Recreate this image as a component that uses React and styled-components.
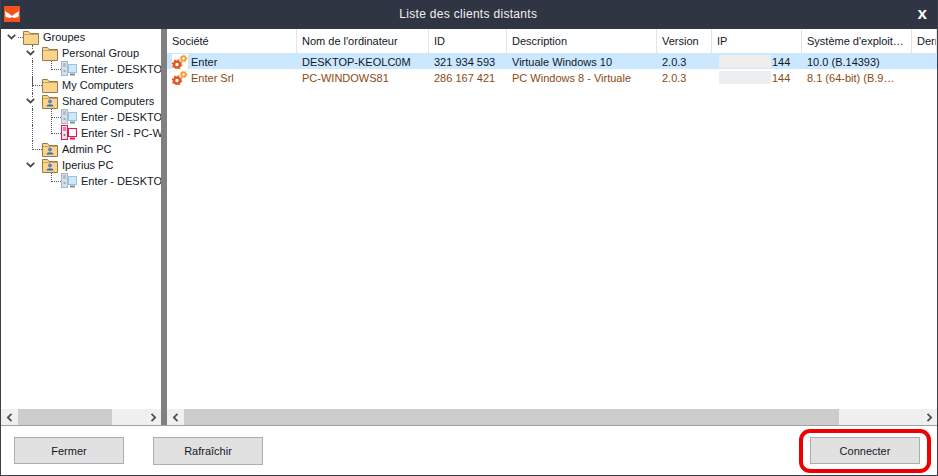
import React from 'react';
import styled, { createGlobalStyle } from 'styled-components';

const GlobalStyle = createGlobalStyle`
  html, body {
    margin: 0;
    padding: 0;
    background: #fff;
  }
  *, *::before, *::after {
    box-sizing: border-box;
  }
  body {
    font-family: 'Liberation Sans', Arial, sans-serif;
    font-size: 11px;
    color: #111827;
  }
`;

const COLUMNS = '130px 132px 78px 150px 55px 90px 110px 1fr';

const treeRows = [
  { level: 0, kind: 'folder', label: 'Groupes', open: true },
  { level: 1, kind: 'folder', label: 'Personal Group', open: true, through: true },
  { level: 2, kind: 'pc', label: 'Enter - DESKTOP-KEOLC0M', elbow: true, through: true },
  { level: 1, kind: 'folder', label: 'My Computers', elbow: true, through: true },
  { level: 1, kind: 'user', label: 'Shared Computers', open: true, through: true },
  { level: 2, kind: 'pc', label: 'Enter - DESKTOP-KEOLC0M', elbow: true, through: true },
  { level: 2, kind: 'off', label: 'Enter Srl - PC-WINDOWS81', elbow: true, through: true },
  { level: 1, kind: 'user', label: 'Admin PC', elbow: true },
  { level: 1, kind: 'user', label: 'Iperius PC', open: true },
  { level: 2, kind: 'pc', label: 'Enter - DESKTOP-KEOLC0M', elbow: true },
];

const headers = ['Société', "Nom de l'ordinateur", 'ID', 'Description', 'Version', 'IP', "Système d'exploit…", 'Dernière'];

const clients = [
  { company: 'Enter', computer: 'DESKTOP-KEOLC0M', id: '321 934 593', desc: 'Virtuale Windows 10', version: '2.0.3', os: '10.0 (B.14393)', selected: true },
  { company: 'Enter Srl', computer: 'PC-WINDOWS81', id: '286 167 421', desc: 'PC Windows 8 - Virtuale', version: '2.0.3', os: '8.1 (64-bit) (B.9…' },
];

function Logo() {
  return (
    <svg width="16" height="16" viewBox="0 0 16 16">
      <rect width="16" height="16" fill="#f4511e" />
      <path d="M1 5 L5.5 8 L8 10 L10.5 8 L15 5 L14.5 11 L10 12 L8 11 L6 12 L1.5 11 Z" fill="#fff" />
    </svg>
  );
}

function Chevron() {
  return (
    <svg width="9" height="8" viewBox="0 0 9 8">
      <rect width="9" height="8" fill="#fff" />
      <path d="M0.8 1.8 L4.5 5.5 L8.2 1.8" fill="none" stroke="#4b4b4b" strokeWidth="1.8" />
    </svg>
  );
}

function FolderIcon({ user }) {
  return (
    <svg width="16" height="15" viewBox="0 0 16 15">
      <path d="M0.5 14.5 V1.5 H5.5 L7 3.5 H15.5 V14.5 Z" fill="#f8d48d" stroke="#9a7b45" />
      <path d="M1 4.5 H15" stroke="#c9a662" />
      {user && (
        <g>
          <circle cx="8" cy="7.5" r="2" fill="#5b84c4" />
          <path d="M4.5 12.5 C4.5 9.5 11.5 9.5 11.5 12.5 Z" fill="#3f6cb4" />
        </g>
      )}
    </svg>
  );
}

function ComputerIcon({ off }) {
  const line = off ? '#e8174a' : '#a9b8c9';
  const tower = off ? '#fbe3ea' : '#d6dfea';
  const screen = off ? '#ffffff' : '#cfe7f9';
  return (
    <svg width="16" height="16" viewBox="0 0 16 16">
      <rect x="7.5" y="3.5" width="8" height="8" fill={screen} stroke={off ? line : '#9cc3de'} />
      <path d="M9 13.5 H14" stroke={off ? line : '#7d8b99'} strokeWidth="2" />
      <rect x="0.5" y="0.5" width="6" height="14" fill={tower} stroke={line} />
      <path d="M2 3 H5 M2 5 H5" stroke={off ? '#e8174a' : '#8b9cb0'} />
      <circle cx="3.5" cy="10" r="1" fill={off ? '#7a5bd0' : '#8b9cb0'} />
    </svg>
  );
}

function GearsIcon() {
  return (
    <svg width="16" height="16" viewBox="0 0 16 16">
      <circle cx="5" cy="10.5" r="3" fill="none" stroke="#e2571b" strokeWidth="2.6" />
      <circle cx="5" cy="10.5" r="4.6" fill="none" stroke="#e2571b" strokeWidth="1.2" strokeDasharray="1.8 1.8" />
      <circle cx="11.5" cy="4.5" r="2.2" fill="none" stroke="#f0a030" strokeWidth="1.8" />
      <circle cx="11.5" cy="4.5" r="3.4" fill="none" stroke="#f0a030" strokeWidth="1" strokeDasharray="1.4 1.4" />
    </svg>
  );
}

function ArrowLeft() {
  return (
    <svg width="7" height="9" viewBox="0 0 7 9">
      <path d="M5.5 0.8 L1.8 4.5 L5.5 8.2" fill="none" stroke="#505050" strokeWidth="1.8" />
    </svg>
  );
}

function ArrowRight() {
  return (
    <svg width="7" height="9" viewBox="0 0 7 9">
      <path d="M1.5 0.8 L5.2 4.5 L1.5 8.2" fill="none" stroke="#505050" strokeWidth="1.8" />
    </svg>
  );
}

function ScrollBar({ thumbStart, thumbWidth }) {
  return (
    <ScrollTrack>
      <ScrollArrow><ArrowLeft /></ScrollArrow>
      <ScrollRail>
        <ScrollThumb style={{ marginLeft: thumbStart, width: thumbWidth }} />
      </ScrollRail>
      <ScrollArrow><ArrowRight /></ScrollArrow>
    </ScrollTrack>
  );
}

function TreeRow({ row }) {
  return (
    <TreeItem $level={row.level} $elbow={row.elbow} $through={row.through}>
      <Toggle $stub={row.level === 0}>{row.open && <Chevron />}</Toggle>
      <TreeIcon>
        {row.kind === 'folder' && <FolderIcon />}
        {row.kind === 'user' && <FolderIcon user />}
        {row.kind === 'pc' && <ComputerIcon />}
        {row.kind === 'off' && <ComputerIcon off />}
      </TreeIcon>
      <TreeLabel>{row.label}</TreeLabel>
    </TreeItem>
  );
}

export default function App() {
  return (
    <Window>
      <GlobalStyle />
      <TitleBar>
        <Logo />
        <Title>Liste des clients distants</Title>
        <CloseButton>x</CloseButton>
      </TitleBar>
      <Body>
        <TreePanel>
          <TreeScroll>
            {treeRows.map((row, i) => (
              <TreeRow key={i} row={row} />
            ))}
          </TreeScroll>
          <ScrollBar thumbStart={1} thumbWidth={94} />
        </TreePanel>
        <Splitter />
        <ListPanel>
          <ListScroll>
            <HeaderRow>
              {headers.map((h) => (
                <HeaderCell key={h}>{h}</HeaderCell>
              ))}
            </HeaderRow>
            {clients.map((c) => (
              <ClientRow key={c.id} $selected={c.selected}>
                <CompanyCell>
                  <IconBox><GearsIcon /></IconBox>
                  {c.company}
                </CompanyCell>
                <Cell>{c.computer}</Cell>
                <Cell>{c.id}</Cell>
                <Cell>{c.desc}</Cell>
                <Cell>{c.version}</Cell>
                <IpCell>
                  <IpMask />
                  144
                </IpCell>
                <Cell>{c.os}</Cell>
                <Cell />
              </ClientRow>
            ))}
          </ListScroll>
          <ScrollBar thumbStart={1} thumbWidth={655} />
        </ListPanel>
      </Body>
      <Footer>
        <Button>Fermer</Button>
        <Button $tall>Rafraîchir</Button>
        <Spacer />
        <Highlighted>
          <Button>Connecter</Button>
        </Highlighted>
      </Footer>
    </Window>
  );
}

const Window = styled.div`
  width: 938px;
  height: 476px;
  display: flex;
  flex-direction: column;
  background: #fff;
  border: 1px solid #3a3f4a;
  border-top: 0;
  overflow: hidden;
`;

const TitleBar = styled.header`
  flex: 0 0 29px;
  margin: 0 -1px;
  padding: 0 11px 1px 4px;
  display: flex;
  align-items: center;
  background: #2f3542;
  color: #fff;
`;

const Title = styled.div`
  flex: 1;
  text-align: center;
  font-size: 12px;
  letter-spacing: 0.3px;
  color: #f2f2f2;
  padding-right: 1px;
`;

const CloseButton = styled.div`
  font-size: 17px;
  font-weight: 700;
  line-height: 20px;
  color: #fff;
`;

const Body = styled.main`
  flex: 1;
  min-height: 0;
  display: flex;
  border-bottom: 1px solid #a0a0a0;
`;

const TreePanel = styled.section`
  flex: 0 0 160px;
  width: 160px;
  display: flex;
  flex-direction: column;
`;

const TreeScroll = styled.div`
  flex: 1;
  overflow: hidden;
`;

const TreeItem = styled.div`
  position: relative;
  height: 16px;
  display: flex;
  align-items: center;
  white-space: nowrap;
  padding-left: ${(p) => 6 + p.$level * 19}px;

  /* connecteur en L vers le parent */
  &::before {
    content: ${(p) => (p.$elbow ? "''" : 'none')};
    position: absolute;
    left: ${(p) => p.$level * 19 + 12}px;
    top: ${(p) => (p.$level === 1 ? 0 : -8)}px;
    width: 10px;
    height: ${(p) => (p.$level === 1 ? 9 : 17)}px;
    border-left: 1px dotted #555;
    border-bottom: 1px dotted #555;
  }

  /* ligne verticale qui continue au niveau du dessus */
  &::after {
    content: ${(p) => (p.$through ? "''" : 'none')};
    position: absolute;
    left: 31px;
    top: 0;
    height: 16px;
    border-left: 1px dotted #555;
  }
`;

const Toggle = styled.span`
  position: relative;
  z-index: 1;
  flex: 0 0 16px;
  width: 16px;
  height: 16px;
  display: flex;
  align-items: center;

  &::after {
    content: ${(p) => (p.$stub ? "''" : 'none')};
    position: absolute;
    left: 11px;
    top: 8px;
    width: 5px;
    border-top: 1px dotted #555;
  }
`;

const TreeIcon = styled.span`
  flex: 0 0 16px;
  width: 16px;
  height: 16px;
  margin-right: 4px;
  display: flex;
  align-items: center;
  background: #fff;
  position: relative;
  z-index: 1;
`;

const TreeLabel = styled.span`
  position: relative;
  z-index: 1;
  background: #fff;
`;

const ScrollTrack = styled.div`
  flex: 0 0 16px;
  display: flex;
  align-items: stretch;
  background: #f0f0f0;
`;

const ScrollArrow = styled.div`
  flex: 0 0 16px;
  display: flex;
  align-items: center;
  justify-content: center;
`;

const ScrollRail = styled.div`
  flex: 1;
  display: flex;
`;

const ScrollThumb = styled.div`
  background: #cdcdcd;
`;

const Splitter = styled.div`
  flex: 0 0 6px;
  background: #808080;
`;

const ListPanel = styled.section`
  flex: 1;
  min-width: 0;
  display: flex;
  flex-direction: column;
`;

const ListScroll = styled.div`
  flex: 1;
  overflow: hidden;
`;

const HeaderRow = styled.div`
  display: grid;
  grid-template-columns: ${COLUMNS};
  height: 24px;
`;

const HeaderCell = styled.div`
  display: flex;
  align-items: center;
  padding-left: 5px;
  border-right: 1px solid #e5e5e5;
  white-space: nowrap;
  overflow: hidden;
`;

const ClientRow = styled.div`
  display: grid;
  grid-template-columns: ${COLUMNS};
  height: 16px;
  background: ${(p) => (p.$selected ? '#cce8ff' : '#fff')};
  color: ${(p) => (p.$selected ? '#111827' : '#8a4a12')};
`;

const Cell = styled.div`
  display: flex;
  align-items: center;
  padding: 1px 0 0 5px;
  white-space: nowrap;
  overflow: hidden;
`;

const CompanyCell = styled(Cell)`
  padding: 1px 0 0 5px;
`;

const IconBox = styled.span`
  flex: 0 0 16px;
  width: 16px;
  height: 15px;
  margin: -1px 3px 0 0;
  background: #fff;
`;

const IpCell = styled(Cell)`
  padding-left: 7px;
`;

const IpMask = styled.span`
  width: 52px;
  height: 13px;
  margin: -1px 1px 0 0;
  background: #eeeeee;
`;

const Footer = styled.footer`
  flex: 0 0 49px;
  display: flex;
  align-items: flex-start;
  padding: 11px 17px 0 13px;
  gap: 29px;
`;

const Spacer = styled.div`
  flex: 1;
`;

const Button = styled.button`
  width: 110px;
  height: ${(p) => (p.$tall ? 28 : 27)}px;
  padding: 0;
  font: inherit;
  color: #111827;
  background: #e1e1e1;
  border: 1px solid #adadad;
`;

const Highlighted = styled.div`
  position: relative;
  display: flex;

  &::after {
    content: '';
    position: absolute;
    inset: -8px -11px -9px -11px;
    border: 4px solid #f00000;
    border-radius: 11px;
    pointer-events: none;
  }
`;
